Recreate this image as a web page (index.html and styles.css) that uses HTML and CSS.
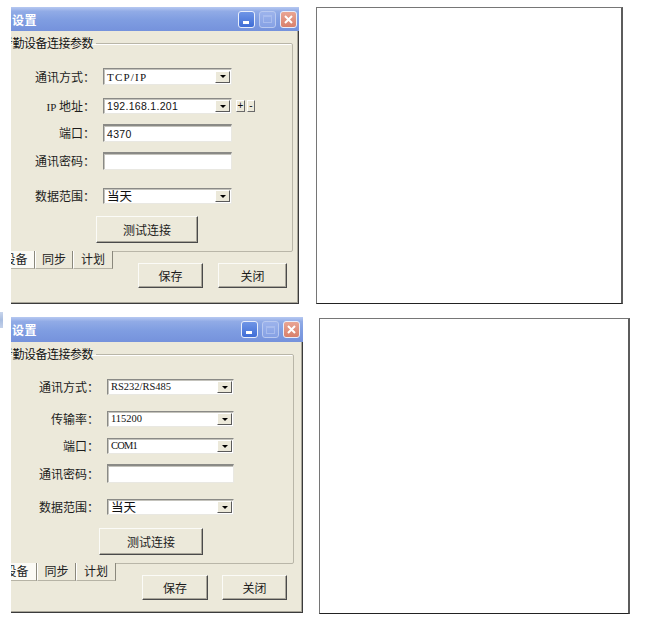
FILE: index.html
```html
<!DOCTYPE html>
<html lang="zh-CN">
<head>
<meta charset="utf-8">
<title>设置</title>
<link rel="stylesheet" href="styles.css">
</head>
<body>
<div class="page">
  <div class="row row-a">
    <section class="dlg dlg-a">
      <header class="titlebar">
        <span class="title">设置</span>
        <div class="tbtns">
          <span class="tb tb-min"><i class="min-bar"></i></span>
          <span class="tb tb-max"><i class="max-box"></i></span>
          <span class="tb tb-close"><svg width="9" height="9" viewBox="0 0 9 9"><path d="M1 1L8 8M8 1L1 8" stroke="#fff" stroke-width="2"/></svg></span>
        </div>
      </header>
      <div class="body">
        <fieldset class="grp">
          <legend>考勤设备连接参数</legend>
          <div class="frow r1"><span class="lab">通讯方式：</span><div class="combo"><span class="val ser wide">TCP/IP</span><span class="dd"><i></i></span></div></div>
          <div class="frow r2"><span class="lab"><span class="ser">IP</span> 地址：</span><div class="fieldwrap"><div class="combo"><span class="val sans">192.168.1.201</span><span class="dd"><i></i></span></div><span class="pm">+</span><span class="pm">-</span></div></div>
          <div class="frow r3"><span class="lab">端口：</span><div class="edit"><span class="val sans">4370</span></div></div>
          <div class="frow r4"><span class="lab">通讯密码：</span><div class="edit"></div></div>
          <div class="frow r5"><span class="lab">数据范围：</span><div class="combo"><span class="val cjk">当天</span><span class="dd"><i></i></span></div></div>
          <div class="testrow"><button class="btn btn-test">测试连接</button></div>
        </fieldset>
        <div class="foot">
          <div class="tabs"><span class="tab on">设备</span><span class="tab">同步</span><span class="tab">计划</span></div>
          <div class="acts"><button class="btn btn-save">保存</button><button class="btn btn-close">关闭</button></div>
        </div>
      </div>
    </section>
    <div class="blank blank-a"></div>
  </div>

  <div class="row row-b">
    <span class="sliver"></span>
    <section class="dlg dlg-b">
      <header class="titlebar">
        <span class="title">设置</span>
        <div class="tbtns">
          <span class="tb tb-min"><i class="min-bar"></i></span>
          <span class="tb tb-max"><i class="max-box"></i></span>
          <span class="tb tb-close"><svg width="9" height="9" viewBox="0 0 9 9"><path d="M1 1L8 8M8 1L1 8" stroke="#fff" stroke-width="2"/></svg></span>
        </div>
      </header>
      <div class="body">
        <fieldset class="grp">
          <legend>考勤设备连接参数</legend>
          <div class="frow r1"><span class="lab">通讯方式：</span><div class="combo"><span class="val ser">RS232/RS485</span><span class="dd"><i></i></span></div></div>
          <div class="frow r2"><span class="lab">传输率：</span><div class="combo"><span class="val ser">115200</span><span class="dd"><i></i></span></div></div>
          <div class="frow r3"><span class="lab">端口：</span><div class="combo"><span class="val ser narrow">COM1</span><span class="dd"><i></i></span></div></div>
          <div class="frow r4"><span class="lab">通讯密码：</span><div class="edit"></div></div>
          <div class="frow r5"><span class="lab">数据范围：</span><div class="combo"><span class="val cjk">当天</span><span class="dd"><i></i></span></div></div>
          <div class="testrow"><button class="btn btn-test">测试连接</button></div>
        </fieldset>
        <div class="foot">
          <div class="tabs"><span class="tab on">设备</span><span class="tab">同步</span><span class="tab">计划</span></div>
          <div class="acts"><button class="btn btn-save">保存</button><button class="btn btn-close">关闭</button></div>
        </div>
      </div>
    </section>
    <div class="blank blank-b"></div>
  </div>
</div>
</body>
</html>
```

FILE: styles.css
```css
* { box-sizing: border-box; }

body {
  margin: 0;
  background: #fff;
  font-family: "Noto Sans CJK SC", "Noto Sans", sans-serif;
  font-size: 12px;
  color: #1c1c1c;
}

.page {
  display: flex;
  flex-direction: column;
  gap: 13px;
  padding-top: 7px;
}

.row { display: flex; align-items: flex-start; }
.row-a { padding-left: 11px; gap: 17px; }
.row-b { padding-left: 0; }

.sliver {
  width: 3px;
  height: 16px;
  margin-top: -5px;
  margin-right: 8px;
  background: linear-gradient(180deg, #c9d6ec, #a9bde0 50%, #c4d1ea);
}

/* ---------- dialog ---------- */
.dlg {
  display: flex;
  flex-direction: column;
  overflow: hidden;
  background: #ece9da;
}
.dlg-a { width: 288px; height: 297px; }
.dlg-b { width: 292px; height: 296px; margin-right: 16px; }

.titlebar {
  display: flex;
  align-items: center;
  flex: none;
  height: 24px;
  padding-right: 2px;
  background: linear-gradient(180deg, #b7c9f1 0%, #91abe6 18%, #7f9de1 55%, #7592dc 100%);
}
.dlg-b .titlebar { height: 25px; padding-right: 3px; }

.title {
  padding-left: 1px;
  color: #fff;
  font-weight: bold;
  font-size: 12px;
  letter-spacing: 0.5px;
}

.tbtns { margin-left: auto; display: flex; gap: 4px; }
.tb {
  width: 17px;
  height: 17px;
  border-radius: 3px;
  border: 1px solid #e8eefb;
  display: flex;
  align-items: center;
  justify-content: center;
  position: relative;
}
.tb-min { background: linear-gradient(180deg, #6f95e6, #3f6dd6); }
.tb-max { background: linear-gradient(180deg, #9cb3ec, #86a1e4); border-color: #b9c9f0; }
.tb-close { background: linear-gradient(180deg, #e9a593, #d8806c); }
.min-bar {
  position: absolute;
  left: 4px;
  bottom: 3px;
  width: 6px;
  height: 3px;
  background: #fff;
}
.max-box {
  width: 9px;
  height: 8px;
  border: 1px solid #a8bcee;
  border-top-width: 2px;
}

.body {
  flex: 1;
  display: flex;
  flex-direction: column;
  border-right: 1px solid #3b3b3b;
  border-bottom: 1px solid #3b3b3b;
  box-shadow: inset -1px -1px 0 #a9a69a;
}

/* ---------- group box ---------- */
.grp {
  margin: 4px 5px 0 -16px;
  padding: 0;
  min-width: 0;
  height: 217px;
  border: 1px solid #b9b6a8;
  border-radius: 2px;
  box-shadow: inset 1px 1px 0 #fff;
}
.dlg-b .grp { height: 218px; margin-right: 8px; }

.grp legend {
  margin-left: 5px;
  padding: 0 3px 0 0;
  line-height: 16px;
  font-size: 12px;
  letter-spacing: -0.5px;
  color: #111;
}

.frow {
  display: grid;
  grid-template-columns: var(--lab) auto;
  column-gap: 8px;
  align-items: center;
}
.dlg-a { --lab: 99px; --fw: 129px; }
.dlg-b { --lab: 103px; --fw: 127px; }

.lab { text-align: right; line-height: 14px; white-space: nowrap; }

.dlg-a .r1 { margin-top: 17px; height: 17px; }
.dlg-a .r2 { margin-top: 13px; height: 16px; }
.dlg-a .r3 { margin-top: 10px; height: 18px; }
.dlg-a .r4 { margin-top: 10px; height: 18px; }
.dlg-a .r5 { margin-top: 18px; height: 16px; }

.dlg-b .r1 { margin-top: 17px; height: 16px; }
.dlg-b .r2 { margin-top: 16px; height: 16px; }
.dlg-b .r3 { margin-top: 11px; height: 16px; }
.dlg-b .r4 { margin-top: 10px; height: 19px; }
.dlg-b .r5 { margin-top: 16px; height: 16px; }

.fieldwrap { display: flex; align-items: center; height: 100%; }

.combo, .edit {
  width: var(--fw);
  height: 100%;
  background: #fff;
  border: 1px solid;
  border-color: #8a8a86 #e9e8e2 #e9e8e2 #8a8a86;
  box-shadow: inset 1px 1px 0 #c4c3bc;
  display: flex;
  align-items: center;
  padding-left: 3px;
}
.edit { border-top-width: 2px; }

.combo .val { flex: 1; }

.val { color: #111; white-space: nowrap; line-height: 12px; }
.ser { font-family: "Liberation Serif", serif; font-size: 10.5px; }
.ser.wide { font-size: 11px; letter-spacing: 1.2px; }
.ser.narrow { letter-spacing: -0.8px; }
.sans { font-family: "Liberation Sans", sans-serif; font-size: 10.5px; letter-spacing: 0.3px; }
.cjk { font-size: 12.5px; }
.lab .ser { font-size: 11px; }

.dd {
  width: 15px;
  height: 12px;
  margin-right: 1px;
  background: #ece9da;
  border: 1px solid;
  border-color: #fff #5a5a5a #5a5a5a #fff;
  display: flex;
  align-items: center;
  justify-content: center;
  flex: none;
}
.dd i {
  width: 0;
  height: 0;
  border-left: 3px solid transparent;
  border-right: 3px solid transparent;
  border-top: 3px solid #000;
}

.pm {
  width: 9px;
  height: 12px;
  margin-left: 4px;
  background: #ece9da;
  border: 1px solid;
  border-color: #fff #6a6a6a #6a6a6a #fff;
  font-family: "Liberation Sans", sans-serif;
  font-size: 10px;
  line-height: 10px;
  text-align: center;
  color: #111;
}
.pm + .pm { margin-left: 2px; width: 8px; }

/* ---------- buttons ---------- */
.btn {
  font-family: "Noto Sans CJK SC", sans-serif;
  font-size: 12px;
  color: #1c1c1c;
  background: #ece9da;
  border: 1px solid;
  border-color: #fbfbf7 #4a4a4a #4a4a4a #fbfbf7;
  box-shadow: inset -1px -1px 0 #a9a69a;
  padding: 0;
  margin: 0;
}

.testrow { margin-top: 12px; }
.dlg-a .testrow { margin-left: 100px; }
.dlg-b .testrow { margin-top: 13px; margin-left: 103px; }
.btn-test { width: 102px; height: 27px; }
.dlg-b .btn-test { width: 104px; }

.foot { display: flex; align-items: flex-start; }

.tabs { display: flex; margin-top: -1px; margin-left: -14px; }
.tab {
  height: 18px;
  line-height: 16px;
  text-align: center;
  background: #ece9da;
  border-right: 1px solid #8a887c;
  border-bottom: 1px solid #b6b3a5;
  border-left: 1px solid #fff;
}
.tab.on { background: #fbfaf5; border-left: none; }
.dlg-a .tab:nth-child(1) { width: 38px; }
.dlg-a .tab:nth-child(2) { width: 38px; }
.dlg-a .tab:nth-child(3) { width: 40px; }
.dlg-b .tab:nth-child(1) { width: 40px; }
.dlg-b .tab:nth-child(2) { width: 39px; }
.dlg-b .tab:nth-child(3) { width: 40px; }

.acts { display: flex; margin-top: 11px; }
.dlg-a .acts { margin-left: 25px; gap: 15px; }
.dlg-b .acts { margin-left: 26px; gap: 14px; }
.btn-save, .btn-close { height: 25px; }
.dlg-a .btn-save { width: 65px; }
.dlg-a .btn-close { width: 69px; }
.dlg-b .btn-save { width: 66px; }
.dlg-b .btn-close { width: 65px; }

/* ---------- blank panels ---------- */
.blank {
  background: #fff;
  border: 1px solid #767676;
  border-right: 2px solid #5c5c5c;
  border-bottom-color: #222;
}
.blank-a { width: 307px; height: 297px; }
.blank-b { width: 311px; height: 296px; margin-top: 1px; }
```
